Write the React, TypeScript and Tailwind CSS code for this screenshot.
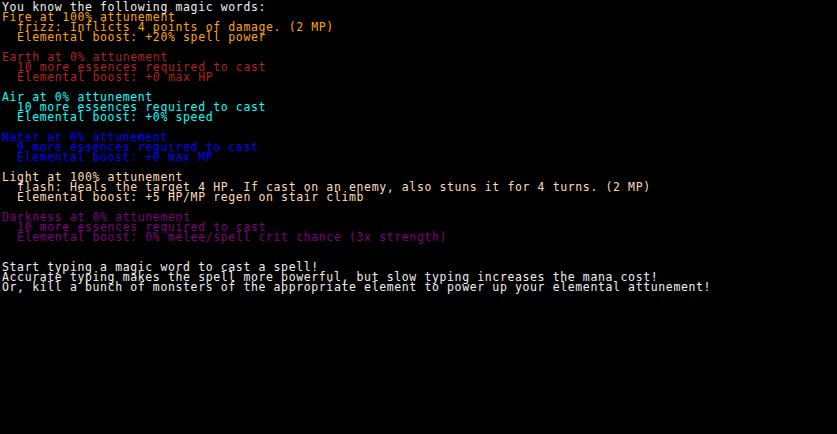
const lines: { text: string; color: string }[] = [
  { text: "You know the following magic words:", color: "text-[#f0f0f0]" },
  { text: "Fire at 100% attunement", color: "text-[#ffa500]" },
  { text: "  frizz: Inflicts 4 points of damage. (2 MP)", color: "text-[#ffa500]" },
  { text: "  Elemental boost: +20% spell power", color: "text-[#ffa500]" },
  { text: "", color: "" },
  { text: "Earth at 0% attunement", color: "text-[#b22222]" },
  { text: "  10 more essences required to cast", color: "text-[#b22222]" },
  { text: "  Elemental boost: +0 max HP", color: "text-[#b22222]" },
  { text: "", color: "" },
  { text: "Air at 0% attunement", color: "text-[#00ffff]" },
  { text: "  10 more essences required to cast", color: "text-[#00ffff]" },
  { text: "  Elemental boost: +0% speed", color: "text-[#00ffff]" },
  { text: "", color: "" },
  { text: "Water at 0% attunement", color: "text-[#0000ff]" },
  { text: "  9 more essences required to cast", color: "text-[#0000ff]" },
  { text: "  Elemental boost: +0 max MP", color: "text-[#0000ff]" },
  { text: "", color: "" },
  { text: "Light at 100% attunement", color: "text-[#ffdab9]" },
  { text: "  flash: Heals the target 4 HP. If cast on an enemy, also stuns it for 4 turns. (2 MP)", color: "text-[#ffdab9]" },
  { text: "  Elemental boost: +5 HP/MP regen on stair climb", color: "text-[#ffdab9]" },
  { text: "", color: "" },
  { text: "Darkness at 0% attunement", color: "text-[#800080]" },
  { text: "  10 more essences required to cast", color: "text-[#800080]" },
  { text: "  Elemental boost: 0% melee/spell crit chance (3x strength)", color: "text-[#800080]" },
  { text: "", color: "" },
  { text: "", color: "" },
  { text: "Start typing a magic word to cast a spell!", color: "text-[#f0f0f0]" },
  { text: "Accurate typing makes the spell more powerful, but slow typing increases the mana cost!", color: "text-[#f0f0f0]" },
  { text: "Or, kill a bunch of monsters of the appropriate element to power up your elemental attunement!", color: "text-[#f0f0f0]" },
]

export default function App() {
  return (
    <div className="w-[837px] h-[434px] bg-black overflow-hidden pl-[2px] pt-[2px] font-['DejaVu_Sans_Mono',monospace] text-[11.5px] tracking-[0.62px] leading-[10px]">
      {lines.map((line, i) => (
        <div key={i} className={`h-[10px] whitespace-pre ${line.color}`}>
          {line.text}
        </div>
      ))}
    </div>
  )
}
